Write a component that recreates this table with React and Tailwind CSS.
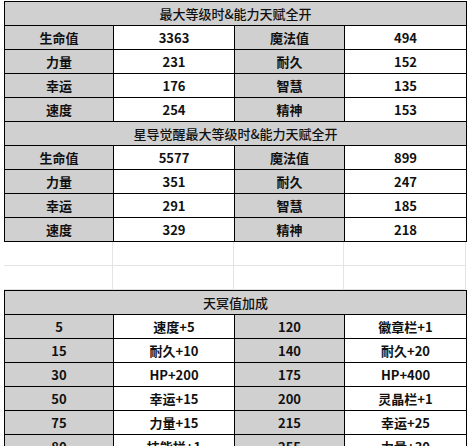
const cols = 'grid grid-cols-[109px_121px_110px_122px]';

const statA = [
  ['生命值', '3363', '魔法值', '494'],
  ['力量', '231', '耐久', '152'],
  ['幸运', '176', '智慧', '135'],
  ['速度', '254', '精神', '153'],
];

const statB = [
  ['生命值', '5577', '魔法值', '899'],
  ['力量', '351', '耐久', '247'],
  ['幸运', '291', '智慧', '185'],
  ['速度', '329', '精神', '218'],
];

const bonus = [
  ['5', '速度+5', '120', '徽章栏+1'],
  ['15', '耐久+10', '140', '耐久+20'],
  ['30', 'HP+200', '175', 'HP+400'],
  ['50', '幸运+15', '200', '灵晶栏+1'],
  ['75', '力量+15', '215', '幸运+25'],
  ['80', '技能栏+1', '255', '力量+30'],
];

function Header({ children }) {
  return (
    <div className="h-[24px] bg-[#d0d0d0] border-r border-b border-black flex items-center justify-center font-medium">
      {children}
    </div>
  );
}

function Row({ cells }) {
  return (
    <div className={cols}>
      {cells.map((c, i) => (
        <div
          key={i}
          className={`h-[24px] border-r border-b border-black flex items-center justify-center font-bold ${i % 2 === 0 ? 'bg-[#d0d0d0]' : 'bg-white'}`}
        >
          {c}
        </div>
      ))}
    </div>
  );
}

export default function App() {
  return (
    <div
      className="w-[470px] h-[446px] overflow-hidden bg-white text-[13px] text-[#111] leading-none pt-px"
      style={{ fontFamily: '"Noto Sans CJK SC", "Noto Sans", sans-serif' }}
    >
      <div className="ml-[4px] w-[463px] border-l border-t border-black">
        <Header>最大等级时&amp;能力天赋全开</Header>
        {statA.map((r, i) => <Row key={i} cells={r} />)}
        <Header>星导觉醒最大等级时&amp;能力天赋全开</Header>
        {statB.map((r, i) => <Row key={i} cells={r} />)}
      </div>

      <div className="ml-[4px] w-[463px]">
        {[0, 1].map((r) => (
          <div key={r} className={cols}>
            {[0, 1, 2, 3].map((c) => (
              <div key={c} className="h-[24px] border-r border-b border-[#e4e4e4]" />
            ))}
          </div>
        ))}
      </div>

      <div className="ml-[4px] w-[463px] border-l border-t border-black">
        <Header>天冥值加成</Header>
        {bonus.map((r, i) => <Row key={i} cells={r} />)}
      </div>
    </div>
  );
}
